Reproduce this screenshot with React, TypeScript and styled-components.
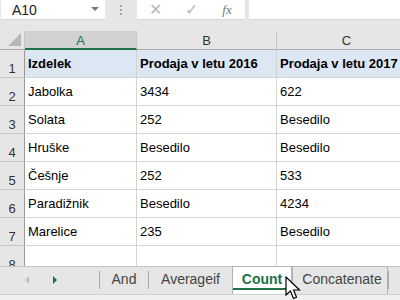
import React from 'react';
import styled, { createGlobalStyle } from 'styled-components';

const GlobalStyle = createGlobalStyle`
  html, body { margin: 0; padding: 0; }
  body {
    width: 400px;
    height: 300px;
    overflow: hidden;
    background: #e6e6e6;
    font-family: "Liberation Sans", Arial, sans-serif;
  }
`;

const Window = styled.div`
  position: relative;
  width: 400px;
  height: 300px;
  display: flex;
  flex-direction: column;
  overflow: hidden;
`;

const FormulaBar = styled.div`
  display: flex;
  height: 20px;
  padding-left: 1px;
  align-items: stretch;
`;

const WhiteBox = styled.div<{ $w?: number }>`
  background: #fff;
  ${p => (p.$w ? `width: ${p.$w}px; flex: none;` : 'flex: 1;')}
  display: flex;
  align-items: center;
  box-sizing: border-box;
  border-bottom: 1px solid #d4d4d4;
`;

const NameText = styled.span`
  flex: 1;
  padding-left: 11px;
  font-size: 14px;
  color: #222;
`;

const DropArrow = styled.span`
  width: 0;
  height: 0;
  margin-right: 6px;
  border-left: 4px solid transparent;
  border-right: 4px solid transparent;
  border-top: 4px solid #777;
  margin-top: -2px;
`;

const Dots = styled.div`
  width: 32px;
  display: flex;
  flex-direction: column;
  align-items: center;
  justify-content: center;
  gap: 2px;
  span {
    width: 2px;
    height: 2px;
    background: #a6a6a6;
  }
`;

const FxButton = styled.span<{ $italic?: boolean }>`
  flex: 1;
  text-align: center;
  font-size: ${p => (p.$italic ? '13px' : '16px')};
  font-family: ${p => (p.$italic ? '"Liberation Serif", serif' : '"Liberation Sans", sans-serif')};
  font-style: ${p => (p.$italic ? 'italic' : 'normal')};
  color: ${p => (p.$italic ? '#777' : '#b8b8b8')};
`;

const Gap = styled.div<{ $h?: number; $w?: number }>`
  flex: none;
  ${p => (p.$h ? `height: ${p.$h}px;` : '')}
  ${p => (p.$w ? `width: ${p.$w}px;` : '')}
`;

const Sheet = styled.div`
  height: 235px;
  flex: none;
  overflow: hidden;
  display: grid;
  grid-template-columns: 25px 112px 140px 140px;
  grid-auto-rows: 28px;
  grid-template-rows: 19px;
  background: #fff;
`;

const Corner = styled.div`
  background: #e6e6e6;
  border-right: 1px solid #c6c6c6;
  border-bottom: 1px solid #ababab;
  position: relative;
  &::after {
    content: '';
    position: absolute;
    right: 3px;
    bottom: 3px;
    border-left: 13px solid transparent;
    border-bottom: 13px solid #b7b7b7;
  }
`;

const ColHead = styled.div<{ $sel?: boolean }>`
  background: ${p => (p.$sel ? '#d2d2d2' : '#e6e6e6')};
  color: ${p => (p.$sel ? '#217346' : '#333')};
  border-right: 1px solid #c6c6c6;
  border-bottom: ${p => (p.$sel ? '2px solid #217346' : '1px solid #ababab')};
  display: flex;
  align-items: center;
  justify-content: center;
  font-size: 13px;
  padding-top: 1px;
`;

const RowHead = styled.div`
  background: #e6e6e6;
  color: #333;
  border-right: 1px solid #9b9b9b;
  border-bottom: 1px solid #c6c6c6;
  display: flex;
  align-items: flex-end;
  justify-content: center;
  font-size: 13px;
  padding-bottom: 1px;
  box-sizing: border-box;
`;

const Cell = styled.div<{ $head?: boolean }>`
  background: ${p => (p.$head ? '#dde6f3' : '#fff')};
  font-weight: ${p => (p.$head ? 'bold' : 'normal')};
  color: #000;
  border-right: 1px solid #d4d4d4;
  border-bottom: 1px solid #d4d4d4;
  display: flex;
  align-items: flex-end;
  padding: 0 0 6px 3px;
  font-size: 13px;
  white-space: nowrap;
  box-sizing: border-box;
`;

const TabBar = styled.div`
  height: 28px;
  flex: none;
  display: flex;
  align-items: stretch;
  border-top: 1px solid #c6c6c6;
  box-sizing: border-box;
  background: #e6e6e6;
`;

const Nav = styled.div`
  width: 100px;
  display: flex;
  align-items: center;
  padding-left: 25px;
  gap: 24px;
  box-sizing: border-box;
  border-right: 1px solid #ababab;
  margin: 4px 0 5px;
`;

const Arrow = styled.span<{ $dir: 'left' | 'right'; $on?: boolean }>`
  width: 0;
  height: 0;
  border-top: 4px solid transparent;
  border-bottom: 4px solid transparent;
  ${p =>
    p.$dir === 'left'
      ? `border-right: 4px solid ${p.$on ? '#1e6b40' : '#c0c0c0'};`
      : `border-left: 4px solid ${p.$on ? '#1e6b40' : '#c0c0c0'};`}
`;

const Tab = styled.div<{ $active?: boolean; $raised?: boolean; $w: number }>`
  width: ${p => p.$w}px;
  flex: none;
  box-sizing: border-box;
  display: flex;
  align-items: center;
  justify-content: center;
  font-size: 14px;
  color: ${p => (p.$active ? '#217346' : '#444')};
  font-weight: ${p => (p.$active ? 'bold' : 'normal')};
  background: ${p => (p.$active ? '#fff' : 'transparent')};
  margin-top: ${p => (p.$active || p.$raised ? '-1px' : '0')};
  border: ${p => (p.$active || p.$raised ? '1px solid #b4b4b4' : 'none')};
  border-bottom: none;
  position: relative;
  padding-bottom: 3px;
  padding-left: ${p => (p.$raised ? '4px' : '0')};
  ${p =>
    p.$active
      ? `&::after { content: ''; position: absolute; left: 0; right: 5px; bottom: 4px; height: 2px; background: #217346; }`
      : ''}
`;

const TabSep = styled.span`
  width: 1px;
  background: #ababab;
  margin: 4px 0 5px;
`;

const BottomStrip = styled.div`
  flex: 1;
  background: #f0f0f0;
  border-top: 1px solid #d0d0d0;
`;

const Pointer = styled.svg`
  position: absolute;
  left: 285px;
  top: 276px;
`;

const rows: [string, string, string][] = [
  ['Izdelek', 'Prodaja v letu 2016', 'Prodaja v letu 2017'],
  ['Jabolka', '3434', '622'],
  ['Solata', '252', 'Besedilo'],
  ['Hruške', 'Besedilo', 'Besedilo'],
  ['Češnje', '252', '533'],
  ['Paradižnik', 'Besedilo', '4234'],
  ['Marelice', '235', 'Besedilo'],
  ['', '', ''],
];

export default function App() {
  return (
    <Window>
      <GlobalStyle />
      <FormulaBar>
        <WhiteBox $w={104}>
          <NameText>A10</NameText>
          <DropArrow />
        </WhiteBox>
        <Dots>
          <span />
          <span />
          <span />
        </Dots>
        <WhiteBox $w={108}>
          <FxButton>✕</FxButton>
          <FxButton>✓</FxButton>
          <FxButton $italic>fx</FxButton>
        </WhiteBox>
        <Gap $w={4} />
        <WhiteBox />
      </FormulaBar>
      <Gap $h={11} />
      <Sheet>
        <Corner />
        <ColHead $sel>A</ColHead>
        <ColHead>B</ColHead>
        <ColHead>C</ColHead>
        {rows.map((r, i) => (
          <React.Fragment key={i}>
            <RowHead>{i + 1}</RowHead>
            {r.map((v, j) => (
              <Cell key={j} $head={i === 0}>
                {v}
              </Cell>
            ))}
          </React.Fragment>
        ))}
      </Sheet>
      <TabBar>
        <Nav>
          <Arrow $dir="left" />
          <Arrow $dir="right" $on />
        </Nav>
        <Tab $w={48}>And</Tab>
        <TabSep />
        <Tab $w={83}>Averageif</Tab>
        <Tab $w={60} $active>
          Count
        </Tab>
        <Tab $w={96} $raised>
          Concatenate
        </Tab>
        <TabSep />
      </TabBar>
      <BottomStrip />
      <Pointer width="16" height="25" viewBox="0 0 16 25">
        <path
          d="M1 1 L1 19 L5.5 15 L8.5 22.5 L11.5 21.2 L8.6 14 L14.5 14 Z"
          fill="#fff"
          stroke="#000"
          strokeWidth="1.2"
          strokeLinejoin="miter"
        />
      </Pointer>
    </Window>
  );
}
